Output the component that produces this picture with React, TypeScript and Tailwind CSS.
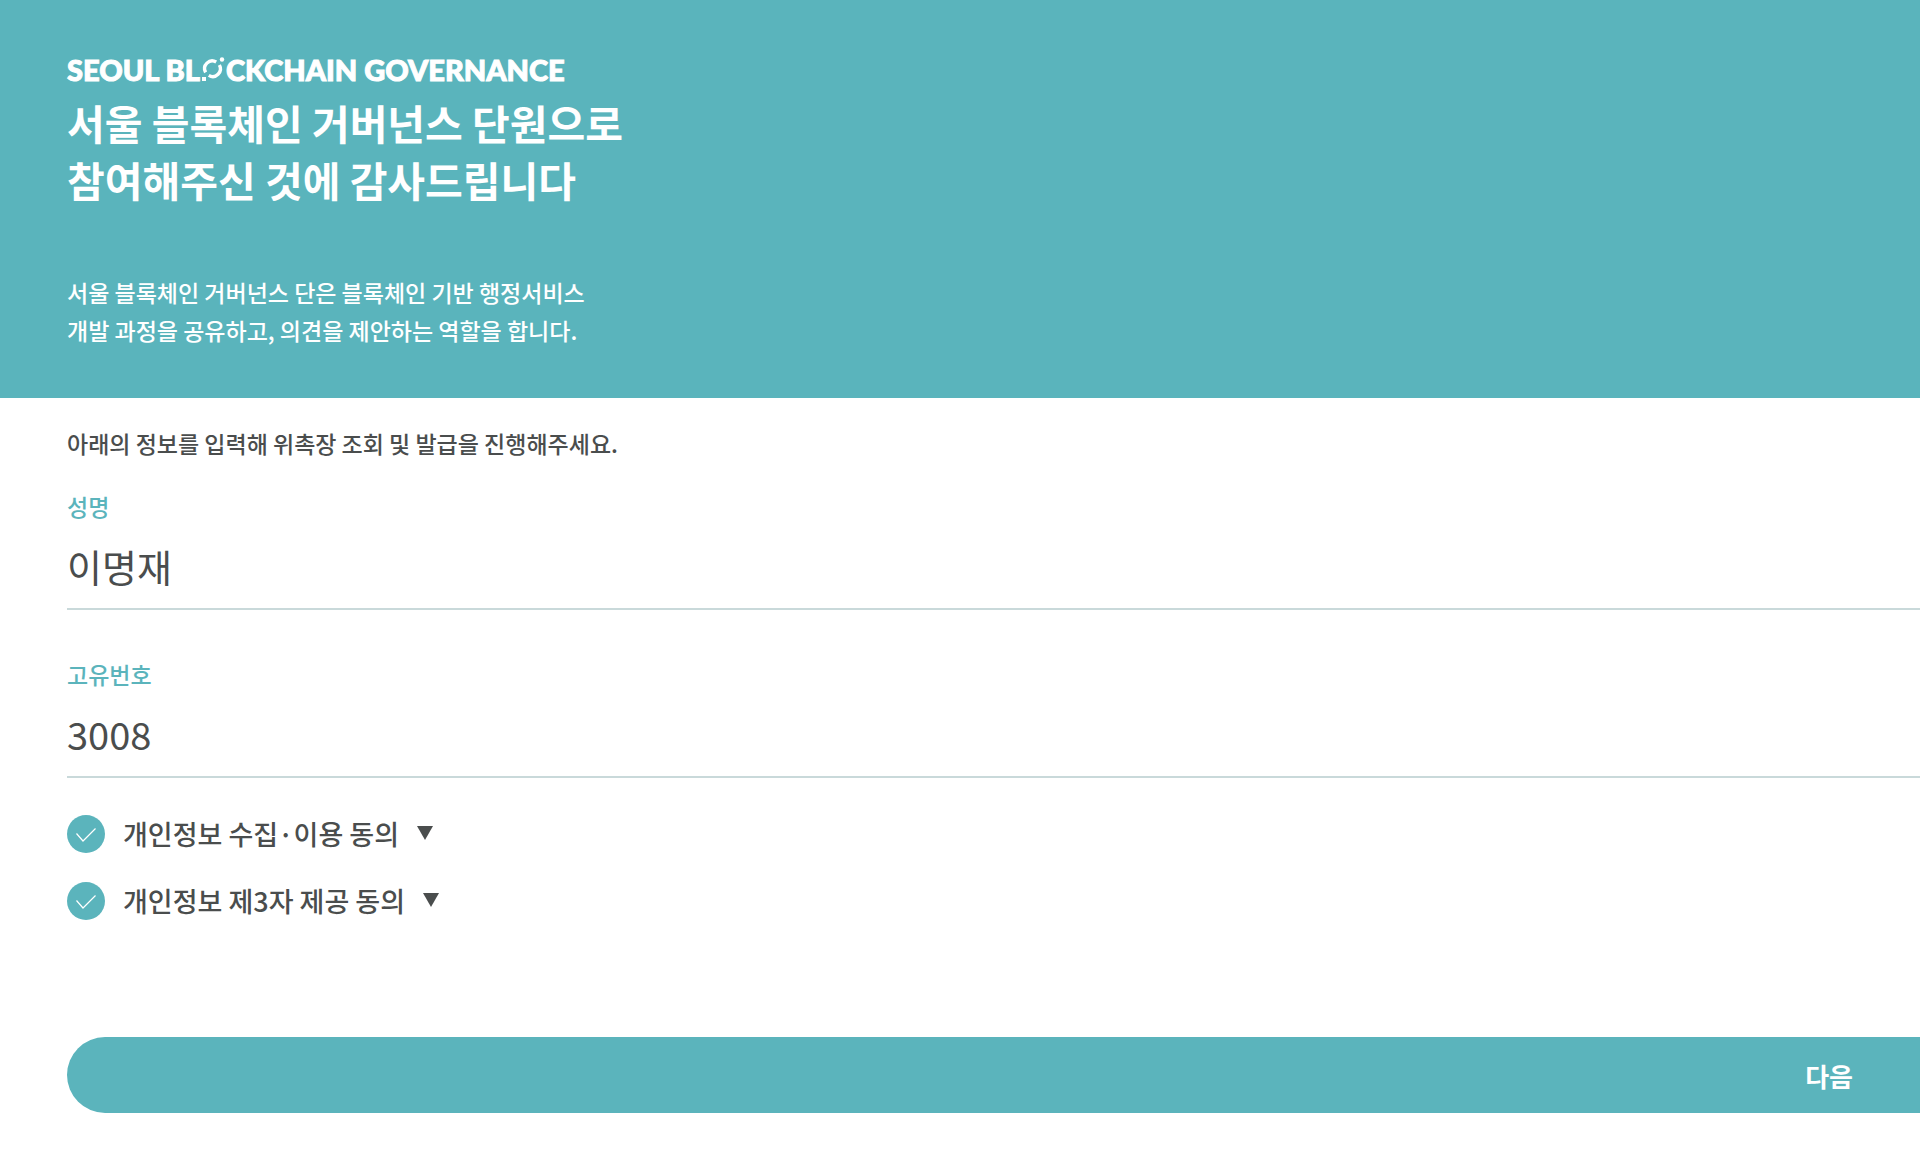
import * as React from "react";

const agreements = [
  { id: "privacy", label: "개인정보 수집·이용 동의" },
  { id: "third-party", label: "개인정보 제3자 제공 동의" },
];

function BlockMark() {
  return (
    <svg viewBox="0 0 26 32" className="h-8 w-[26px]" aria-hidden="true">
      <g fill="none" stroke="currentColor" strokeWidth="3.4">
        <path d="M5.6 18.4A7.7 7.7 0 0 1 16.2 8" />
        <path d="M19.4 11A7.7 7.7 0 0 1 8.8 21.4" />
      </g>
      <circle cx="22" cy="5.5" r="2.2" fill="currentColor" />
      <rect x="2" y="23" width="4" height="4" fill="currentColor" />
    </svg>
  );
}

function Field({
  id,
  label,
  defaultValue,
}: {
  id: string;
  label: string;
  defaultValue: string;
}) {
  return (
    <div className="flex flex-col">
      <label htmlFor={id} className="text-[23px] leading-[34px] font-medium text-[#5bb4bc]">
        {label}
      </label>
      <input
        id={id}
        type="text"
        defaultValue={defaultValue}
        className="h-[87px] w-full border-b-2 border-[#c9d9da] bg-transparent text-[38px] outline-none"
      />
    </div>
  );
}

function Agreement({ id, label }: { id: string; label: string }) {
  const [checked, setChecked] = React.useState(true);

  return (
    <li className="flex h-[38px] items-center">
      <span className="grid size-[38px] [grid-template-areas:'stack']">
        <input
          id={id}
          type="checkbox"
          checked={checked}
          onChange={(e) => setChecked(e.target.checked)}
          className="size-[38px] appearance-none rounded-full bg-gray-300 [grid-area:stack] checked:bg-[#5bb4bc]"
        />
        <svg
          viewBox="0 0 38 38"
          className="pointer-events-none size-[38px] text-white [grid-area:stack]"
          fill="none"
          stroke="currentColor"
          strokeWidth="1.2"
          aria-hidden="true"
        >
          <path d="M9.5 18.5l6.5 7.5L28.5 13.5" />
        </svg>
      </span>
      <label htmlFor={id} className="ml-[18px] text-[27px] leading-[38px] font-medium">
        {label}
      </label>
      <button type="button" aria-label={`${label} 내용 보기`} className="ml-4">
        <svg viewBox="0 0 20 20" className="size-5" fill="currentColor" aria-hidden="true">
          <path d="M2 2h16L10 16z" />
        </svg>
      </button>
    </li>
  );
}

export default function App() {
  return (
    <div className="min-h-screen bg-white font-['Noto_Sans_CJK_KR',sans-serif] text-[#4a4d4d]">
      <header className="bg-[#5ab4bc] px-[67px] pt-[54px] pb-[49px] text-white">
        <div className="flex h-8 items-center font-['Lato',sans-serif] text-[29px] font-black [-webkit-text-stroke:1px_white]">
          <span>SEOUL BL</span>
          <BlockMark />
          <span>CKCHAIN GOVERNANCE</span>
        </div>
        <h1 className="mt-2 text-[41px] leading-[57px] font-bold">
          서울 블록체인 거버넌스 단원으로
          <br />
          참여해주신 것에 감사드립니다
        </h1>
        <p className="mt-[65px] text-[23px] leading-[38px] font-medium">
          서울 블록체인 거버넌스 단은 블록체인 기반 행정서비스
          <br />
          개발 과정을 공유하고, 의견을 제안하는 역할을 합니다.
        </p>
      </header>

      <form className="pt-[26px] pl-[67px]" onSubmit={(e) => e.preventDefault()}>
        <p className="text-[23px] leading-[38px] font-medium">
          아래의 정보를 입력해 위촉장 조회 및 발급을 진행해주세요.
        </p>
        <div className="mt-[27px] flex flex-col gap-[47px]">
          <Field id="name" label="성명" defaultValue="이명재" />
          <Field id="number" label="고유번호" defaultValue="3008" />
        </div>
        <ul className="mt-[37px] flex flex-col gap-[29px]">
          {agreements.map((item) => (
            <Agreement key={item.id} {...item} />
          ))}
        </ul>
        <button
          type="submit"
          className="mt-[117px] h-[76px] w-full rounded-l-full bg-[#5bb4bc] pr-[67px] text-right text-[26px] font-bold text-white"
        >
          다음
        </button>
      </form>
    </div>
  );
}
